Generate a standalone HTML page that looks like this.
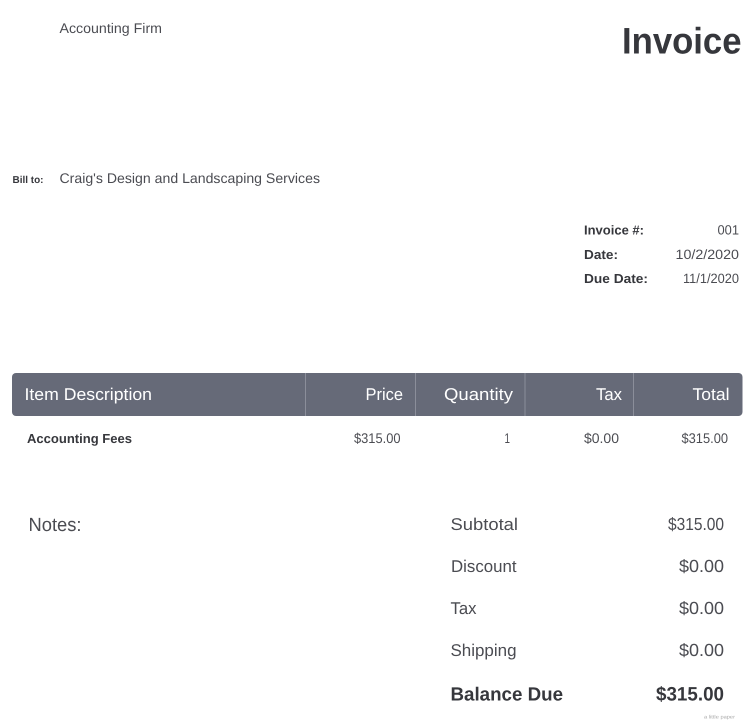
<!DOCTYPE html>
<html lang="en">
<head>
<meta charset="utf-8">
<title>Invoice</title>
<style>
html,body{margin:0;padding:0;background:#fff;width:750px;height:722px;overflow:hidden}
svg{display:block;position:absolute;left:0;top:0}
text{font-family:"Liberation Sans",sans-serif;fill:#4b4c52;text-rendering:geometricPrecision}
.b{font-weight:700;fill:#36373c}
.w{fill:#fff}
</style>
</head>
<body>
<svg width="750" height="722" viewBox="0 0 750 722" xmlns="http://www.w3.org/2000/svg">
<text x="59.500" y="33" font-size="14" textLength="102.500" lengthAdjust="spacingAndGlyphs">Accounting Firm</text>
<text x="622" y="53.500" font-size="37" class="b" textLength="119.500" lengthAdjust="spacingAndGlyphs">Invoice</text>
<text x="12.500" y="183" font-size="10" class="b" textLength="31" lengthAdjust="spacingAndGlyphs">Bill to:</text>
<text x="59.500" y="183" font-size="14" textLength="260.500" lengthAdjust="spacingAndGlyphs">Craig's Design and Landscaping Services</text>

<text x="584" y="234.500" font-size="13" class="b" textLength="60" lengthAdjust="spacingAndGlyphs">Invoice #:</text>
<text x="717.500" y="234.500" font-size="13.500" textLength="21.500" lengthAdjust="spacingAndGlyphs">001</text>
<text x="584" y="259" font-size="13" class="b" textLength="34" lengthAdjust="spacingAndGlyphs">Date:</text>
<text x="675.500" y="259" font-size="13.500" textLength="63.500" lengthAdjust="spacingAndGlyphs">10/2/2020</text>
<text x="584" y="283" font-size="13" class="b" textLength="64" lengthAdjust="spacingAndGlyphs">Due Date:</text>
<text x="683" y="283" font-size="13.500" textLength="56" lengthAdjust="spacingAndGlyphs">11/1/2020</text>

<rect x="12" y="373" width="730.500" height="43" rx="4" fill="#666a78"/>
<rect x="305" y="373" width="1" height="43" fill="#8b8e9a"/>
<rect x="415" y="373" width="1" height="43" fill="#8b8e9a"/>
<rect x="524.500" y="373" width="1" height="43" fill="#8b8e9a"/>
<rect x="633" y="373" width="1" height="43" fill="#8b8e9a"/>
<text x="24.500" y="400" font-size="17" class="w" textLength="127.500" lengthAdjust="spacingAndGlyphs">Item Description</text>
<text x="365.500" y="400" font-size="17" class="w" textLength="37.500" lengthAdjust="spacingAndGlyphs">Price</text>
<text x="444" y="400" font-size="17" class="w" textLength="69" lengthAdjust="spacingAndGlyphs">Quantity</text>
<text x="596" y="400" font-size="17" class="w" textLength="26" lengthAdjust="spacingAndGlyphs">Tax</text>
<text x="692.500" y="400" font-size="17" class="w" textLength="37" lengthAdjust="spacingAndGlyphs">Total</text>

<text x="27" y="443" font-size="13" class="b" textLength="105" lengthAdjust="spacingAndGlyphs">Accounting Fees</text>
<text x="354" y="443" font-size="14" textLength="46.500" lengthAdjust="spacingAndGlyphs">$315.00</text>
<text x="504.500" y="443" font-size="14" textLength="5.500" lengthAdjust="spacingAndGlyphs">1</text>
<text x="584" y="443" font-size="14" textLength="35" lengthAdjust="spacingAndGlyphs">$0.00</text>
<text x="681.500" y="443" font-size="14" textLength="46.500" lengthAdjust="spacingAndGlyphs">$315.00</text>

<text x="28.500" y="531" font-size="19" textLength="53" lengthAdjust="spacingAndGlyphs">Notes:</text>

<text x="450.500" y="530" font-size="17" textLength="67.500" lengthAdjust="spacingAndGlyphs">Subtotal</text>
<text x="668" y="530" font-size="17.500" textLength="56" lengthAdjust="spacingAndGlyphs">$315.00</text>
<text x="451" y="572" font-size="17" textLength="65.500" lengthAdjust="spacingAndGlyphs">Discount</text>
<text x="679" y="572" font-size="17.500" textLength="45" lengthAdjust="spacingAndGlyphs">$0.00</text>
<text x="450.500" y="614" font-size="17" textLength="26" lengthAdjust="spacingAndGlyphs">Tax</text>
<text x="679" y="614" font-size="17.500" textLength="45" lengthAdjust="spacingAndGlyphs">$0.00</text>
<text x="450.500" y="656" font-size="17" textLength="66" lengthAdjust="spacingAndGlyphs">Shipping</text>
<text x="679" y="656" font-size="17.500" textLength="45" lengthAdjust="spacingAndGlyphs">$0.00</text>
<text x="450.500" y="700.500" font-size="19" class="b" textLength="112.500" lengthAdjust="spacingAndGlyphs">Balance Due</text>
<text x="656" y="700.500" font-size="19.500" class="b" textLength="68" lengthAdjust="spacingAndGlyphs">$315.00</text>
<text x="704" y="718.500" font-size="5" style="fill:#aaa" textLength="31" lengthAdjust="spacingAndGlyphs">a little paper</text>
</svg>
</body>
</html>
